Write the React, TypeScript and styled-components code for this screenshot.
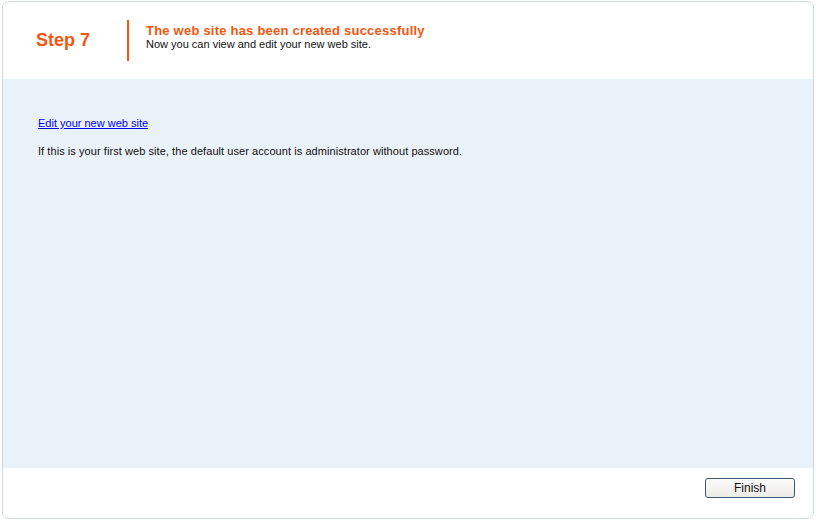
import React from "react";
import styled, { createGlobalStyle } from "styled-components";

const Global = createGlobalStyle`
  html, body { margin: 0; padding: 0; background: #ffffff; }
  body { font-family: "Liberation Sans", Arial, sans-serif; }
`;

const Page = styled.div`
  width: 816px;
  height: 521px;
  padding: 1px 2px 2px 2px;
  box-sizing: border-box;
  background: #ffffff;
`;

const Card = styled.div`
  height: 100%;
  box-sizing: border-box;
  border: 1px solid #cfd8df;
  border-radius: 7px;
  overflow: hidden;
  display: flex;
  flex-direction: column;
  background: #ffffff;
`;

const Header = styled.div`
  height: 77px;
  flex: none;
  display: flex;
  align-items: center;
  background: #ffffff;
`;

const StepLabel = styled.div`
  width: 124px;
  padding-left: 33px;
  box-sizing: border-box;
  color: #f2570f;
  font-size: 18px;
  font-weight: bold;
`;

const Divider = styled.div`
  width: 2px;
  height: 41px;
  background: #f2570f;
  margin-right: 17px;
`;

const HeaderText = styled.div`
  display: flex;
  flex-direction: column;
  margin-top: -8px;
`;

const Title = styled.div`
  color: #f2570f;
  font-size: 13px;
  font-weight: bold;
  letter-spacing: 0.22px;
  line-height: 15px;
`;

const Subtitle = styled.div`
  color: #111111;
  font-size: 11px;
  line-height: 13px;
`;

const Body = styled.div`
  flex: 1;
  background: #eaf2f9;
  padding: 34px 35px 0 35px;
`;

const Link = styled.a`
  display: inline-block;
  color: #0000ee;
  font-size: 11px;
  text-decoration: underline;
  line-height: 14px;
`;

const Para = styled.p`
  margin: 13px 0 0 0;
  font-size: 11px;
  color: #111111;
  line-height: 14px;
  letter-spacing: 0.065px;
`;

const Footer = styled.div`
  height: 50px;
  flex: none;
  display: flex;
  justify-content: flex-end;
  align-items: flex-start;
  padding: 10px 18px 0 0;
  box-sizing: border-box;
  background: #ffffff;
`;

const Button = styled.button`
  width: 90px;
  height: 20px;
  border: 1px solid #3e5673;
  border-radius: 3px;
  background: linear-gradient(#fbfbfa, #ecebe6);
  font-family: "Liberation Sans", Arial, sans-serif;
  font-size: 12px;
  color: #111111;
  padding: 0;
  cursor: pointer;
`;

export default function App() {
  return (
    <>
      <Global />
      <Page>
        <Card>
          <Header>
            <StepLabel>Step 7</StepLabel>
            <Divider />
            <HeaderText>
              <Title>The web site has been created successfully</Title>
              <Subtitle>Now you can view and edit your new web site.</Subtitle>
            </HeaderText>
          </Header>
          <Body>
            <Link href="#">Edit your new web site</Link>
            <Para>
              If this is your first web site, the default user account is administrator without password.
            </Para>
          </Body>
          <Footer>
            <Button>Finish</Button>
          </Footer>
        </Card>
      </Page>
    </>
  );
}
